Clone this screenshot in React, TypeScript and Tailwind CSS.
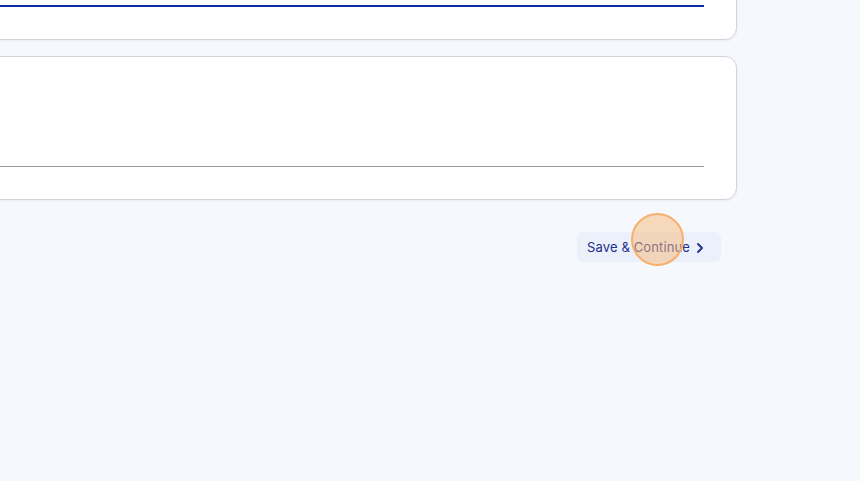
import { ChevronRight } from "lucide-react";

export default function App() {
  return (
    <div className="min-h-screen bg-[#f5f8fc] overflow-hidden font-['Inter',sans-serif]">
      <div className="-ml-[40px] -mt-[60px] w-[777px] flex flex-col gap-4">
        {/* Previous section card */}
        <div className="h-[100px] bg-white border border-[#d2d4d8] rounded-xl shadow-[0_1px_3px_rgba(0,0,0,0.06)] pr-8 pt-[64px]">
          <div className="h-[2px] bg-[#0f2ba3]" />
        </div>

        {/* Current section card */}
        <div className="h-[144px] bg-white border border-[#d2d4d8] rounded-xl shadow-[0_1px_3px_rgba(0,0,0,0.06)] pr-8 pt-[109px]">
          <div className="h-px bg-[#9c9c9c]" />
        </div>

        {/* Actions */}
        <div className="flex justify-end pr-4 mt-4">
          <div className="relative">
            <button className="h-[30px] w-[144px] flex items-center gap-0.5 pl-[10px] pt-px rounded-md bg-[#ecf0fa] text-[#1d2f8f] text-[13px] tracking-[0.01em]">
              Save &amp; Continue
              <ChevronRight className="w-4 h-4" strokeWidth={2.75} />
            </button>
            <div className="absolute left-[54px] -top-[19px] w-[53px] h-[53px] rounded-full bg-[#f7b77a]/50 border-2 border-[#f6b06c] pointer-events-none" />
          </div>
        </div>
      </div>
    </div>
  );
}
